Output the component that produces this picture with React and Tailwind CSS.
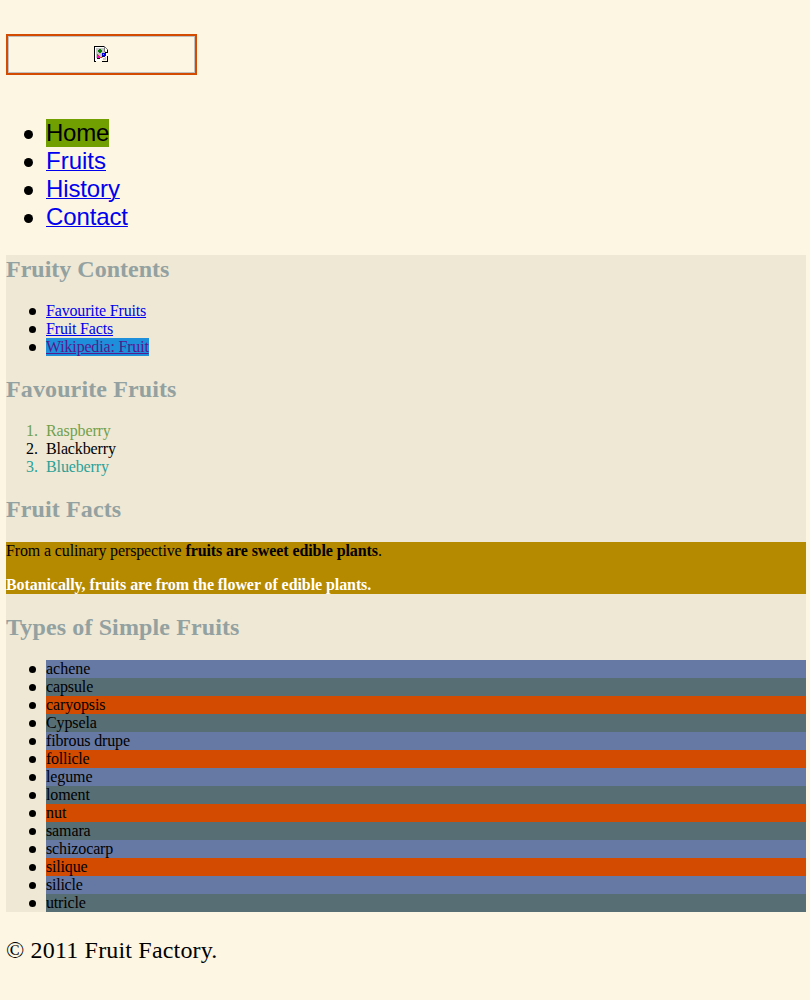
import React from "react";

const simpleFruits = [
  ["achene", "bg-[#6678a4]", "tracking-normal"],
  ["capsule", "bg-[#586e75]", "tracking-[-0.12px]"],
  ["caryopsis", "bg-[#d34b00]", "tracking-[-0.12px]"],
  ["Cypsela", "bg-[#586e75]", "tracking-[-0.1px]"],
  ["fibrous drupe", "bg-[#6678a4]", "tracking-[-0.14px]"],
  ["follicle", "bg-[#d34b00]", "tracking-[-0.24px]"],
  ["legume", "bg-[#6678a4]", "tracking-[-0.12px]"],
  ["loment", "bg-[#586e75]", "tracking-[-0.12px]"],
  ["nut", "bg-[#d34b00]", "tracking-normal"],
  ["samara", "bg-[#586e75]", "tracking-[-0.12px]"],
  ["schizocarp", "bg-[#6678a4]", "tracking-[-0.12px]"],
  ["silique", "bg-[#d34b00]", "tracking-[-0.18px]"],
  ["silicle", "bg-[#6678a4]", "tracking-[-0.24px]"],
  ["utricle", "bg-[#586e75]", "tracking-[-0.18px]"],
];

function Item({ children, className = "" }) {
  return (
    <li className="flex h-[18px]">
      <span className="flex w-10 shrink-0 items-start pl-[23px] pt-1.5">
        <span className="h-[6.5px] w-[6.5px] rounded-full bg-black" />
      </span>
      <div className={"grow " + className}>{children}</div>
    </li>
  );
}

function NavItem({ children }) {
  return (
    <li className="flex h-7">
      <span className="flex w-10 shrink-0 items-start pl-[18px] pt-[11px]">
        <span className="h-[8.5px] w-[8.5px] rounded-full bg-black" />
      </span>
      {children}
    </li>
  );
}

function NumberItem({ n, children, className }) {
  return (
    <li className={"flex h-[18px] tracking-[-0.12px] " + className}>
      <span className="w-10 shrink-0 pl-5 tracking-normal">{n}.</span>
      {children}
    </li>
  );
}

function Heading({ children, className = "" }) {
  return <h2 className={"text-2xl leading-7 font-bold text-[#93a1a1] " + className}>{children}</h2>;
}

const link = "text-[#0000ee] underline decoration-1";

function BrokenImage() {
  return (
    <svg width="14" height="16" viewBox="0 0 14 16" shapeRendering="crispEdges" aria-hidden="true">
      <path fill="#fff" d="M1 1h9l3 4v5l-4 2-2 3H1z" />
      <path fill="#c6c6c6" d="M2 2h8v3h2v5H9v2H2zM9 12h2v-1h1v3H9z" />
      <path fill="#000" d="M0 0h10v1H1v14h1v1H0zM13 4h1v3h-3V6h2zM13 10h1v6H8v-1h5z" />
      <path fill="#777" d="M10 0h1v1h1v1h1v1h1v1h-1V3h-1V2h-1v4h-1z" />
      <path fill="#087808" d="M5 3h2v1h1v2H7v1H5V6H4V4h1z" />
      <path fill="#d33" d="M3 8h1v1h1v1h1v1h2v1H3z" />
      <path fill="#ff00d8" d="M3 9h1v1h1v1h1v1H3z" />
      <path fill="#111" d="M3 12h3v1H3zM8 10h3v1H8z" />
      <path fill="#0000dd" d="M8 7h4v3h-1v1H9v-1H8z" />
      <path fill="#5cb8ff" d="M9 8h1v1H9z" />
    </svg>
  );
}

export default function App() {
  return (
    <div className="h-[1000px] overflow-hidden bg-[#fdf6e3] pr-1 pl-1.5 pt-[34px] font-['Liberation_Serif',serif] text-base leading-[18px] text-black">
      <div className="flex h-[41px] w-[191px] border-2 border-[#d34b00]">
        <div className="flex grow items-start justify-start border border-[#c0c0c0] pl-[85px] pt-[9px]">
          <BrokenImage />
        </div>
      </div>

      <nav className="mt-11 font-['Liberation_Sans',sans-serif] text-2xl leading-7">
        <ul>
          <NavItem><span className="bg-[#719e00] tracking-[-0.25px]">Home</span></NavItem>
          <NavItem><a href="#fruits" className={link}>Fruits</a></NavItem>
          <NavItem><a href="#history" className={link + " tracking-[-0.12px]"}>History</a></NavItem>
          <NavItem><a href="#contact" className={link + " tracking-[-0.12px]"}>Contact</a></NavItem>
        </ul>
      </nav>

      <main className="mt-6 flex flex-col gap-[19px] bg-[#eee8d5]">
        <Heading>Fruity Contents</Heading>
        <ul>
          <Item><a href="#favourite" className={link + " tracking-[-0.16px]"}>Favourite Fruits</a></Item>
          <Item><a href="#facts" className={link + " tracking-[-0.17px]"}>Fruit Facts</a></Item>
          <Item className="flex"><a href="#wiki" className="bg-[#1e8fdb] tracking-[-0.18px] text-[#551a8b] underline">Wikipedia: Fruit</a></Item>
        </ul>
        <Heading className="tracking-[0.12px]">Favourite Fruits</Heading>
        <ol>
          <NumberItem n={1} className="text-[#71a04b]">Raspberry</NumberItem>
          <NumberItem n={2} className="text-black">Blackberry</NumberItem>
          <NumberItem n={3} className="text-[#2aa198]">Blueberry</NumberItem>
        </ol>
        <Heading className="tracking-[0.12px]">Fruit Facts</Heading>
        <div className="flex flex-col gap-4 bg-[#b58900]">
          <p className="tracking-[-0.13px]">From a culinary perspective <strong className="tracking-[-0.09px]">fruits are sweet edible plants</strong>.</p>
          <p className="font-bold tracking-[-0.08px] text-white">Botanically, fruits are from the flower of edible plants.</p>
        </div>
        <Heading className="tracking-[0.12px]">Types of Simple Fruits</Heading>
        <ul>
          {simpleFruits.map(([name, color, tracking]) => (
            <Item key={name} className={color + " " + tracking}>{name}</Item>
          ))}
        </ul>
      </main>

      <footer className="mt-6 text-2xl leading-7 tracking-[0.18px]">© 2011 Fruit Factory.</footer>
    </div>
  );
}
